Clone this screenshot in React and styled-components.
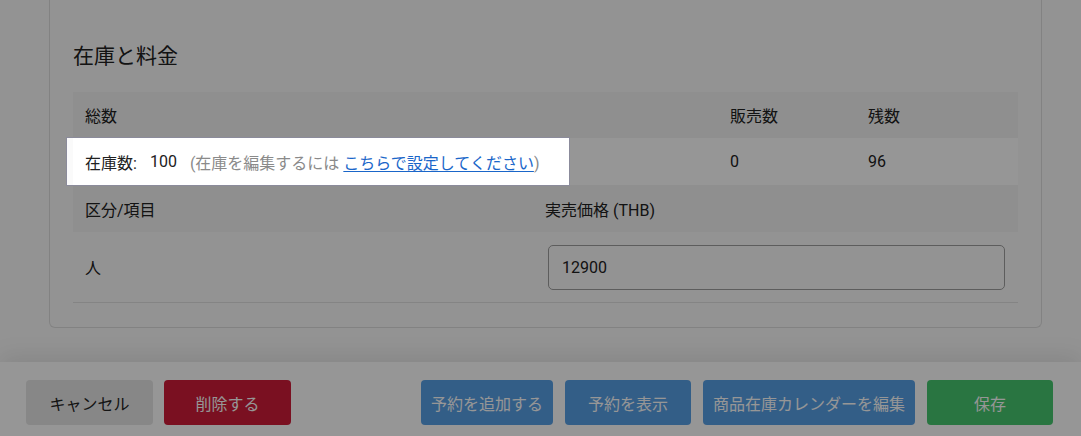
import React from 'react';
import styled, { createGlobalStyle } from 'styled-components';

const GlobalStyle = createGlobalStyle`
  html, body { margin: 0; padding: 0; }
  body {
    font-family: Roboto, "Noto Sans CJK JP", sans-serif;
    color: #212121;
    background: #fafafa;
  }
`;

const Page = styled.div`
  height: 100vh;
  display: flex;
  flex-direction: column;
`;

const Main = styled.main`
  flex: 1;
  background: #fafafa;
`;

const Card = styled.section`
  margin: 0 39px 0 49px;
  padding: 41px 23px 24px;
  border: 1px solid #dedede;
  border-top: none;
  border-radius: 0 0 6px 6px;
`;

const Title = styled.h2`
  margin: 0 0 21px;
  font-size: 21px;
  font-weight: 400;
  line-height: 30px;
`;

const rowBg = { head: '#f3f3f3', focus: '#fff', plain: 'transparent' };

const Row = styled.div`
  position: relative;
  display: grid;
  grid-template-columns: ${p => p.cols};
  align-items: center;
  height: ${p => p.h}px;
  background: ${p => rowBg[p.kind || 'plain']};
  border-bottom: ${p => (p.divider ? '1px solid #e1e1e1' : 'none')};
  font-size: 16px;
`;

const Cell = styled.div`
  padding: ${p => p.pad || '0 12px'};
  white-space: nowrap;
`;

const Spotlight = styled.div`
  position: absolute;
  left: -6px;
  top: 0;
  bottom: 0;
  width: 502px;
  z-index: 10;
  pointer-events: none;
  box-shadow: 0 0 0 1px #8b8b9b, 0 0 0 9999px rgba(0, 0, 0, 0.41);
`;

const StockCell = styled(Cell)`
  display: flex;
  align-items: center;
`;

const Label = styled.span`
  margin-right: 13px;
`;

const Value = styled.span`
  margin-right: 13px;
`;

const Note = styled.span`
  color: #8a8a8a;
`;

const Link = styled.a`
  color: #1a66c9;
  text-decoration: underline;
  text-underline-offset: 2px;
`;

const Input = styled.input`
  box-sizing: border-box;
  width: 100%;
  height: 45px;
  padding: 0 13px;
  border: 1px solid #9e9e9e;
  border-radius: 5px;
  background: #fafafa;
  font: inherit;
  font-size: 16px;
  color: #212121;
  outline: none;
`;

const Footer = styled.footer`
  height: 74px;
  box-sizing: border-box;
  padding: 18px 28px 0 26px;
  background: #fff;
  box-shadow: 0 -6px 22px rgba(0, 0, 0, 0.09);
  display: flex;
  justify-content: space-between;
  align-items: flex-start;
`;

const Group = styled.div`
  display: flex;
  gap: ${p => p.gap}px;
`;

const colors = {
  gray: ['#e6e6e6', '#222'],
  red: ['#cf1c38', '#fff'],
  blue: ['#58a0e6', '#fff'],
  green: ['#46c86f', '#fff'],
};

const Button = styled.button`
  height: 45px;
  min-width: ${p => p.w}px;
  padding: 0 10px;
  border: none;
  border-radius: 4px;
  background: ${p => colors[p.tone][0]};
  color: ${p => colors[p.tone][1]};
  font: inherit;
  font-size: 16px;
  cursor: pointer;
`;

export default function App() {
  return (
    <Page>
      <GlobalStyle />
      <Main>
        <Card>
          <Title>在庫と料金</Title>
          <Row kind="head" h={46} cols="645px 138px 1fr">
            <Cell>総数</Cell>
            <Cell>販売数</Cell>
            <Cell>残数</Cell>
          </Row>
          <Row kind="focus" h={47} cols="645px 138px 1fr">
            <Spotlight />
            <StockCell>
              <Label>在庫数:</Label>
              <Value>100</Value>
              <Note>
                (在庫を編集するには <Link href="#">こちらで設定してください</Link>)
              </Note>
            </StockCell>
            <Cell>0</Cell>
            <Cell>96</Cell>
          </Row>
          <Row kind="head" h={47} cols="460px 1fr">
            <Cell>区分/項目</Cell>
            <Cell>実売価格 (THB)</Cell>
          </Row>
          <Row h={70} divider cols="460px 1fr">
            <Cell>人</Cell>
            <Cell pad="0 13px 0 15px">
              <Input defaultValue="12900" />
            </Cell>
          </Row>
        </Card>
      </Main>
      <Footer>
        <Group gap={11}>
          <Button tone="gray" w={127}>キャンセル</Button>
          <Button tone="red" w={127}>削除する</Button>
        </Group>
        <Group gap={12}>
          <Button tone="blue" w={131}>予約を追加する</Button>
          <Button tone="blue" w={126}>予約を表示</Button>
          <Button tone="blue" w={211}>商品在庫カレンダーを編集</Button>
          <Button tone="green" w={126}>保存</Button>
        </Group>
      </Footer>
    </Page>
  );
}
